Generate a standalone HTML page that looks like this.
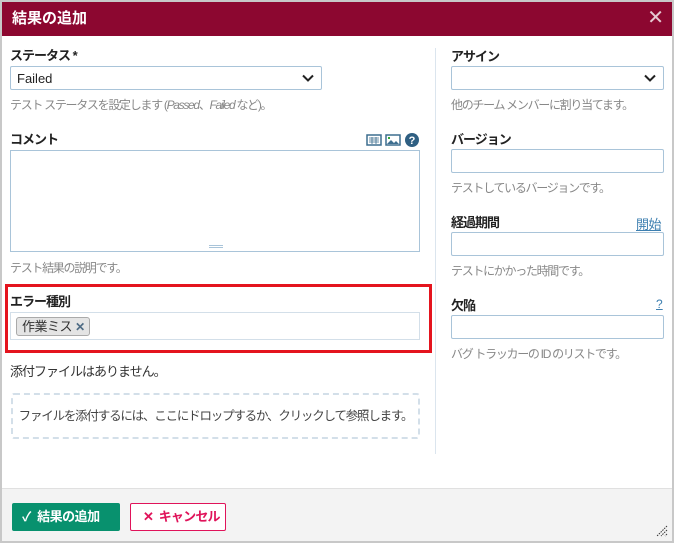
<!DOCTYPE html>
<html><head><meta charset="utf-8"><style>
*{box-sizing:border-box;margin:0;padding:0}
html,body{width:674px;height:543px;overflow:hidden}
body{background:#c8c8c8;font-family:"Liberation Sans","Noto Sans CJK JP",sans-serif;position:relative;white-space:nowrap}
.dlg{position:absolute;left:2px;top:2px;width:670px;height:539px;background:#fff;overflow:hidden}
.hdr{position:absolute;left:0;top:0;width:670px;height:34px;background:#8c0730;color:#fff;font-weight:bold;font-size:15px;line-height:34px;padding-left:10px}
.x{position:absolute;right:8px;top:0;color:#e6c9d2;font-size:20px;line-height:32px;font-weight:normal}
.a{position:absolute}
.lbl{font-size:13px;font-weight:bold;color:#222;letter-spacing:-1px}
.hint{font-size:12px;color:#888;letter-spacing:-1.3px}
.inp{position:absolute;border:1px solid #a9c4d9;border-radius:2px;background:#fff}
.chev{position:absolute;right:7px;top:5px}
.foot{position:absolute;left:0;top:486px;width:670px;height:53px;background:#f3f3f3;border-top:1px solid #e0e0e0}
</style></head><body>
<div class="dlg">
<div class="hdr">結果の追加<span class="x">✕</span></div>

<div class="a lbl" style="left:8px;top:43px">ステータス *</div>
<div class="inp" style="left:8px;top:64px;width:312px;height:24px"><span style="position:absolute;left:6px;top:4px;font-size:13px;color:#222">Failed</span>
<svg class="chev" width="12" height="12" viewBox="0 0 12 12"><path d="M1 3.5l5 5 5-5" stroke="#222" stroke-width="2" fill="none"/></svg></div>
<div class="a hint" style="left:8px;top:94px">テスト ステータスを設定します (<i>Passed</i>、<i>Failed</i> など)。</div>

<div class="a lbl" style="left:8px;top:127px">コメント</div>
<svg class="a" style="left:364px;top:130px" width="54" height="16" viewBox="0 0 54 16">
<rect x="1" y="3" width="14" height="10" fill="#fff" stroke="#3d6e8f" stroke-width="1.5"/><path d="M3 6h10M3 8h10M3 10h10M6 5v7M10 5v7" stroke="#3d6e8f" stroke-width="0.8"/>
<rect x="20" y="3" width="14" height="10" fill="#fff" stroke="#3d6e8f" stroke-width="1.5"/><path d="M21 12l4-4 3 3 2-2 3 3z" fill="#3d6e8f"/><rect x="22" y="5" width="2" height="2" fill="#3a3"/>
<circle cx="46" cy="8" r="7" fill="#2f5f82"/><text x="46" y="12" font-size="11" font-weight="bold" fill="#fff" text-anchor="middle" font-family="Liberation Sans">?</text></svg>
<div class="inp" style="left:8px;top:148px;width:410px;height:102px;border-radius:0"><div style="position:absolute;left:198px;bottom:3px;width:14px;height:3px;border-top:1px solid #a9c4d9;border-bottom:1px solid #a9c4d9"></div></div>
<div class="a hint" style="left:8px;top:257px">テスト結果の説明です。</div>

<div class="a" style="left:3px;top:282px;width:427px;height:69px;border:3px solid #e4141e"></div>
<div class="a lbl" style="left:8px;top:289px">エラー種別</div>
<div class="inp" style="left:8px;top:310px;width:410px;height:28px;border-color:#d3dfe9;border-radius:0">
<div style="position:absolute;left:5px;top:4px;width:74px;height:19px;background:#e4e4e4;border:1px solid #aaa;border-radius:3px;font-size:13px;color:#333;line-height:17px;padding-left:5px;letter-spacing:-0.5px">作業ミス <b style="color:#4e6b84;font-size:12px">✕</b></div></div>

<div class="a" style="left:8px;top:359px;font-size:13px;color:#333;letter-spacing:-1px">添付ファイルはありません。</div>
<div class="a" style="left:9px;top:391px;width:409px;height:46px;border:2px dashed #d3dfe9;border-radius:3px;text-align:center;line-height:42px;font-size:12.5px;color:#444;letter-spacing:-1.2px">ファイルを添付するには、ここにドロップするか、クリックして参照します。</div>

<div class="a" style="left:433px;top:46px;width:1px;height:406px;background:#dbe5ee"></div>

<div class="a lbl" style="left:449px;top:44px">アサイン</div>
<div class="inp" style="left:449px;top:64px;width:213px;height:24px"><svg class="chev" width="12" height="12" viewBox="0 0 12 12"><path d="M1 3.5l5 5 5-5" stroke="#222" stroke-width="2" fill="none"/></svg></div>
<div class="a hint" style="left:449px;top:94px">他のチーム メンバーに割り当てます。</div>

<div class="a lbl" style="left:449px;top:127px">バージョン</div>
<div class="inp" style="left:449px;top:147px;width:213px;height:24px"></div>
<div class="a hint" style="left:449px;top:177px">テストしているバージョンです。</div>

<div class="a lbl" style="left:449px;top:210px">経過期間</div>
<div class="a" style="left:634px;top:212px;font-size:13px;color:#3d7fb0;text-decoration:underline;letter-spacing:-0.5px">開始</div>
<div class="inp" style="left:449px;top:230px;width:213px;height:24px"></div>
<div class="a hint" style="left:449px;top:260px">テストにかかった時間です。</div>

<div class="a lbl" style="left:449px;top:293px">欠陥</div>
<div class="a" style="left:654px;top:295px;font-size:12px;color:#3d7fb0;text-decoration:underline">?</div>
<div class="inp" style="left:449px;top:313px;width:213px;height:24px"></div>
<div class="a hint" style="left:449px;top:343px">バグ トラッカーの ID のリストです。</div>

<div class="foot">
<div class="a" style="left:10px;top:14px;width:108px;height:28px;background:#08916e;border-radius:2px;color:#fff;font-weight:bold;font-size:13px;line-height:28px;padding-left:10px;letter-spacing:-0.5px">✓&nbsp; 結果の追加</div>
<div class="a" style="left:128px;top:14px;width:96px;height:28px;background:#fff;border:1px solid #e0135a;border-radius:2px;color:#e0135a;font-weight:bold;font-size:13px;line-height:26px;padding-left:12px;letter-spacing:-0.8px">✕&nbsp; キャンセル</div>
<svg class="a" style="right:4px;bottom:4px" width="12" height="12" viewBox="0 0 12 12"><path d="M11 1L1 11M11 5L5 11M11 9L9 11" stroke="#333" stroke-width="1" stroke-dasharray="1.5 1"/></svg>
</div>
</div>
</body></html>
